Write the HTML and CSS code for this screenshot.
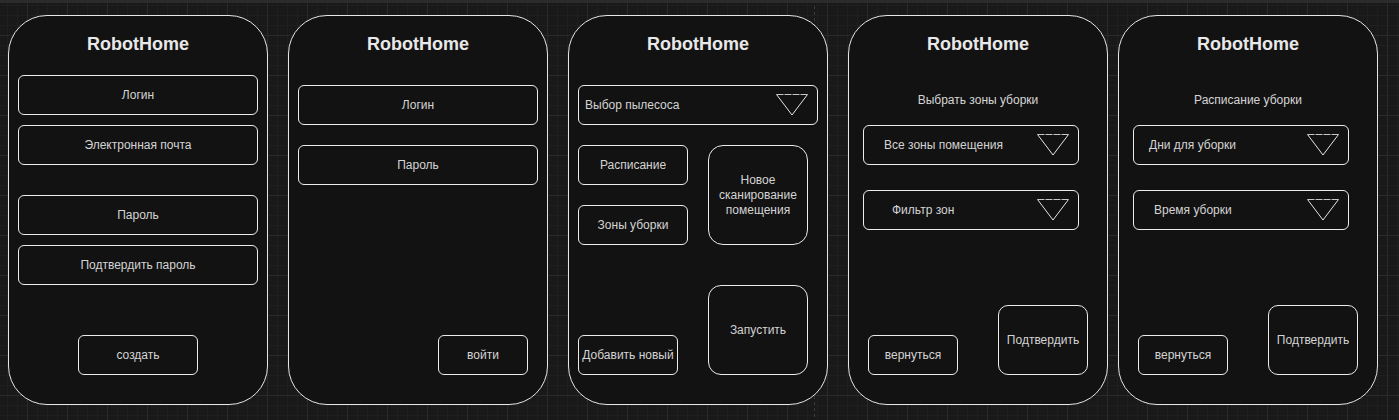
FILE: index.html
```html
<!DOCTYPE html>
<html lang="ru">
<head>
    <meta charset="UTF-8">
    <meta name="viewport" content="width=device-width, initial-scale=1.0">
    <title>RobotHome - макеты</title>
    <link rel="stylesheet" href="styles.css">
</head>
<body>
    <div class="topbar"></div>

    <div class="canvas">
        <!-- Регистрация -->
        <div class="phone">
            <div class="title">RobotHome</div>
            <div class="field first">Логин</div>
            <div class="field gap-10">Электронная почта</div>
            <div class="field gap-30">Пароль</div>
            <div class="field gap-10">Подтвердить пароль</div>
            <div class="field btn-create">создать</div>
        </div>

        <!-- Вход -->
        <div class="phone">
            <div class="title">RobotHome</div>
            <div class="field first-low">Логин</div>
            <div class="field gap-20">Пароль</div>
            <div class="field btn-login">войти</div>
        </div>

        <!-- Главный экран -->
        <div class="phone">
            <div class="title">RobotHome</div>
            <div class="field select first-low pad-6">
                <span>Выбор пылесоса</span>
                <svg class="arrow" width="32" height="22" viewBox="0 0 32 22">
                    <polyline points="0.5,0.5 16,21 31.5,0.5" fill="none" stroke="#e6e6e6"/>
                    <line x1="0.5" y1="0.5" x2="31.5" y2="0.5" stroke="#c8c8c8" stroke-dasharray="7 1"/>
                </svg>
            </div>
            <div class="main-row">
                <div class="col-left">
                    <div class="field">Расписание</div>
                    <div class="field gap-20">Зоны уборки</div>
                    <div class="field btn-add">Добавить новый</div>
                </div>
                <div class="col-right">
                    <div class="field big-scan">Новое<br>сканирование<br>помещения</div>
                    <div class="field big-start">Запустить</div>
                </div>
            </div>
        </div>

        <!-- Зоны уборки -->
        <div class="phone">
            <div class="title">RobotHome</div>
            <div class="caption">Выбрать зоны уборки</div>
            <div class="field select wide first-select pad-20">
                <span>Все зоны помещения</span>
                <svg class="arrow" width="32" height="22" viewBox="0 0 32 22">
                    <polyline points="0.5,0.5 16,21 31.5,0.5" fill="none" stroke="#e6e6e6"/>
                    <line x1="0.5" y1="0.5" x2="31.5" y2="0.5" stroke="#c8c8c8" stroke-dasharray="7 1"/>
                </svg>
            </div>
            <div class="field select wide gap-25 pad-28">
                <span>Фильтр зон</span>
                <svg class="arrow" width="32" height="22" viewBox="0 0 32 22">
                    <polyline points="0.5,0.5 16,21 31.5,0.5" fill="none" stroke="#e6e6e6"/>
                    <line x1="0.5" y1="0.5" x2="31.5" y2="0.5" stroke="#c8c8c8" stroke-dasharray="7 1"/>
                </svg>
            </div>
            <div class="bottom-row">
                <div class="field btn-back">вернуться</div>
                <div class="field btn-confirm">Подтвердить</div>
            </div>
        </div>

        <!-- Расписание -->
        <div class="phone close">
            <div class="title">RobotHome</div>
            <div class="caption">Расписание уборки</div>
            <div class="field select wide first-select pad-15">
                <span>Дни для уборки</span>
                <svg class="arrow" width="32" height="22" viewBox="0 0 32 22">
                    <polyline points="0.5,0.5 16,21 31.5,0.5" fill="none" stroke="#e6e6e6"/>
                    <line x1="0.5" y1="0.5" x2="31.5" y2="0.5" stroke="#c8c8c8" stroke-dasharray="7 1"/>
                </svg>
            </div>
            <div class="field select wide gap-25 pad-20">
                <span>Время уборки</span>
                <svg class="arrow" width="32" height="22" viewBox="0 0 32 22">
                    <polyline points="0.5,0.5 16,21 31.5,0.5" fill="none" stroke="#e6e6e6"/>
                    <line x1="0.5" y1="0.5" x2="31.5" y2="0.5" stroke="#c8c8c8" stroke-dasharray="7 1"/>
                </svg>
            </div>
            <div class="bottom-row">
                <div class="field btn-back">вернуться</div>
                <div class="field btn-confirm">Подтвердить</div>
            </div>
        </div>
    </div>
</body>
</html>
```

FILE: styles.css
```css
html {
    height: 100%;
    background-color: #191919;
    background-image:
        linear-gradient(#3a3a3a 3px, transparent 3px),
        linear-gradient(90deg, #2a2a2a 1px, transparent 1px),
        linear-gradient(#2a2a2a 1px, transparent 1px),
        linear-gradient(90deg, #1f1f1f 1px, transparent 1px),
        linear-gradient(#1f1f1f 1px, transparent 1px);
    background-size: 1px 6px, 40px 40px, 40px 40px, 10px 10px, 10px 10px;
    background-position: 814px 0, 27px 0, 0 35px, 7px 0, 0 5px;
    background-repeat: repeat-y, repeat, repeat, repeat, repeat;
}

body {
    font-family: "Liberation Sans", Arial, sans-serif;
    margin: 0;
    padding: 0;
}

.topbar {
    height: 3px;
    background-color: #2b2b2b;
}

.canvas {
    display: flex;
    gap: 20px;
    padding: 12px 0 0 8px;
}

.phone {
    width: 260px;
    height: 390px;
    box-sizing: border-box;
    border: 1px solid #e6e6e6;
    border-radius: 39px;
    background-color: #121212;
    padding: 0 9px 29px 9px;
    display: flex;
    flex-direction: column;
    flex-shrink: 0;
}

.phone.close {
    margin-left: -10px;
}

.title {
    margin-top: 18px;
    height: 20px;
    line-height: 20px;
    text-align: center;
    font-size: 18px;
    font-weight: bold;
    color: #e8e8e8;
}

.caption {
    margin-top: 39px;
    height: 14px;
    line-height: 14px;
    text-align: center;
    font-size: 12px;
    color: #d6d6d6;
}

.field {
    height: 40px;
    box-sizing: border-box;
    border: 1px solid #ececec;
    border-radius: 6px;
    display: flex;
    align-items: center;
    justify-content: center;
    text-align: center;
    font-size: 12px;
    line-height: 15px;
    color: #d4d4d4;
    flex-shrink: 0;
}

.first {
    margin-top: 21px;
}

.first-low {
    margin-top: 31px;
}

.gap-10 {
    margin-top: 10px;
}

.gap-20 {
    margin-top: 20px;
}

.gap-25 {
    margin-top: 25px;
}

.gap-30 {
    margin-top: 30px;
}

.btn-create {
    width: 120px;
    margin: auto auto 0 auto;
}

.btn-login {
    width: 90px;
    margin: auto 10px 0 auto;
}

/* выпадающие списки */
.select {
    justify-content: space-between;
    padding-right: 9px;
}

.select .arrow {
    display: block;
}

.pad-6 {
    padding-left: 6px;
}

.pad-15 {
    padding-left: 15px;
}

.pad-20 {
    padding-left: 20px;
}

.pad-28 {
    padding-left: 28px;
}

.wide {
    width: 216px;
    margin-left: 5px;
}

.first-select {
    margin-top: 18px;
}

/* главный экран */
.main-row {
    display: flex;
    gap: 20px;
    margin-top: 20px;
    flex: 1;
}

.col-left {
    width: 110px;
    display: flex;
    flex-direction: column;
}

.col-right {
    width: 100px;
    display: flex;
    flex-direction: column;
}

.btn-add {
    width: 100px;
    margin-top: auto;
}

.big-scan {
    height: 100px;
    border-radius: 15px;
}

.big-start {
    height: 90px;
    border-radius: 13px;
    margin-top: auto;
}

.bottom-row {
    display: flex;
    justify-content: space-between;
    align-items: flex-end;
    margin-top: auto;
    padding: 0 10px;
}

.btn-back {
    width: 90px;
}

.btn-confirm {
    width: 90px;
    height: 70px;
    border-radius: 10px;
}
```
